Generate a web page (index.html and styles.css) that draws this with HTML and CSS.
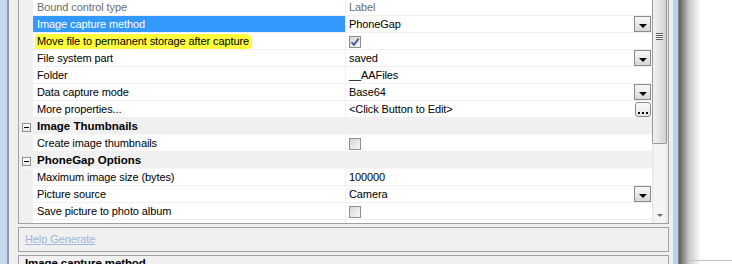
FILE: index.html
```html
<!DOCTYPE html>
<html lang="en">
<head>
    <meta charset="UTF-8">
    <title>Properties</title>
    <link rel="stylesheet" href="styles.css">
</head>
<body>
    <div class="window">
        <div class="frame-left"></div>

        <div class="panel">
            <div class="grid">
                <div class="rows">
                    <div class="row readonly">
                        <div class="gutter"></div>
                        <div class="label">Bound control type</div>
                        <div class="value">Label</div>
                    </div>
                    <div class="row selected">
                        <div class="gutter"></div>
                        <div class="label">Image capture method</div>
                        <div class="value">PhoneGap<span class="drop"></span></div>
                    </div>
                    <div class="row">
                        <div class="gutter"></div>
                        <div class="label"><span class="mark">Move file to permanent storage after capture</span></div>
                        <div class="value">
                            <span class="check checked">
                                <svg width="10" height="10" viewBox="0 0 10 10"><path d="M1.5 5.2 L4 7.8 L8.6 1.6" fill="none" stroke="#3f5d9c" stroke-width="1.8"/></svg>
                            </span>
                        </div>
                    </div>
                    <div class="row">
                        <div class="gutter"></div>
                        <div class="label">File system part</div>
                        <div class="value">saved<span class="drop"></span></div>
                    </div>
                    <div class="row">
                        <div class="gutter"></div>
                        <div class="label">Folder</div>
                        <div class="value">__AAFiles</div>
                    </div>
                    <div class="row">
                        <div class="gutter"></div>
                        <div class="label">Data capture mode</div>
                        <div class="value">Base64<span class="drop"></span></div>
                    </div>
                    <div class="row">
                        <div class="gutter"></div>
                        <div class="label">More properties...</div>
                        <div class="value">&lt;Click Button to Edit&gt;<span class="ellipsis"><i></i><i></i><i></i></span></div>
                    </div>
                    <div class="row category">
                        <div class="gutter"><span class="toggle"></span></div>
                        <div class="label">Image Thumbnails</div>
                    </div>
                    <div class="row">
                        <div class="gutter"></div>
                        <div class="label">Create image thumbnails</div>
                        <div class="value"><span class="check"></span></div>
                    </div>
                    <div class="row category">
                        <div class="gutter"><span class="toggle"></span></div>
                        <div class="label">PhoneGap Options</div>
                    </div>
                    <div class="row">
                        <div class="gutter"></div>
                        <div class="label">Maximum image size (bytes)</div>
                        <div class="value">100000</div>
                    </div>
                    <div class="row">
                        <div class="gutter"></div>
                        <div class="label">Picture source</div>
                        <div class="value">Camera<span class="drop"></span></div>
                    </div>
                    <div class="row">
                        <div class="gutter"></div>
                        <div class="label">Save picture to photo album</div>
                        <div class="value"><span class="check"></span></div>
                    </div>
                    <div class="row">
                        <div class="gutter"></div>
                        <div class="label"></div>
                        <div class="value"></div>
                    </div>
                </div>
                <div class="scrollbar">
                    <div class="thumb"><span class="grip"></span></div>
                    <div class="track"></div>
                    <div class="arrow"><span></span></div>
                </div>
            </div>

            <div class="help"><a href="#">Help Generate</a></div>

            <div class="desc"><b>Image capture method</b></div>
        </div>

        <div class="frame-right"><div class="ledge"></div></div>
    </div>
</body>
</html>
```

FILE: styles.css
```css
/* General Reset */
* {
    margin: 0;
    padding: 0;
    box-sizing: border-box;
}

body {
    width: 732px;
    height: 264px;
    overflow: hidden;
    background-color: white;
    font-family: 'Liberation Sans', Arial, sans-serif;
    font-size: 11px;
    letter-spacing: -0.1px;
    color: black;
}

.window {
    display: flex;
    height: 264px;
}

.frame-left {
    width: 9px;
    background-color: #c7d9ee;
    border-right: 2px solid #8f9aa6;
}

.panel {
    width: 664px;
    display: flex;
    flex-direction: column;
    gap: 3px;
    padding: 0 4px 0 9px;
    background-color: #f0f0f0;
    overflow: hidden;
}

.frame-right {
    flex: 1;
    background: linear-gradient(to right, #b8d2ef 0, #b8d2ef 5px, #8c8c8c 5px, #8c8c8c 6px, #5c5c5c 6px, #c8c8c8 16px, white 28px);
}

.frame-right .ledge {
    margin: 260px 0 0 14px;
    height: 1px;
    background-color: #c4c4c4;
}

/* Property grid */
.grid {
    display: flex;
    flex-shrink: 0;
    height: 226px;
    margin-top: -2px;
    border: 1px solid #a0a0a0;
    background-color: white;
    overflow: hidden;
}

.rows {
    width: 633px;
    display: flex;
    flex-direction: column;
    overflow: hidden;
}

.row {
    display: flex;
    flex-shrink: 0;
    height: 17px;
    border-bottom: 1px solid #f0f0f0;
    line-height: 16px;
    white-space: nowrap;
}

.row .gutter {
    width: 14px;
    background-color: #f0f0f0;
}

.row .label {
    width: 312px;
    padding-left: 4px;
    overflow: hidden;
}

.row .value {
    flex: 1;
    display: flex;
    align-items: center;
    padding-left: 3px;
    border-left: 1px solid #f0f0f0;
}

.row.readonly {
    color: #6d6d6d;
}

.row.selected .label {
    background-color: #3399ff;
    color: white;
}

.row .mark {
    display: inline-block;
    margin-left: -2px;
    padding: 0 3px 0 2px;
    line-height: 15px;
    background-color: #ffff3c;
    border-radius: 3px 6px 4px 2px;
}

.row.category {
    background-color: #f0f0f0;
    border-bottom-color: #f7f7f7;
}

.row.category .label {
    flex: 1;
    font-weight: bold;
    font-size: 11.5px;
    letter-spacing: 0;
}

.row.category .gutter {
    padding: 5px 0 0 3px;
}

.toggle {
    display: flex;
    align-items: center;
    justify-content: center;
    width: 9px;
    height: 9px;
    border: 1px solid #8e8e8e;
    background: linear-gradient(white, #e6e6e6);
}

.toggle::after {
    content: "";
    width: 5px;
    height: 1px;
    background-color: black;
}

/* Editors inside the value column */
.drop {
    display: flex;
    align-items: center;
    justify-content: center;
    margin-left: auto;
    margin-right: 1px;
    width: 17px;
    height: 16px;
    padding-top: 3px;
    border: 1px solid #8a8a8a;
    background: linear-gradient(#f7f7f7, #ececec 45%, #d6d6d6);
}

.drop::after {
    content: "";
    border-top: 4px solid black;
    border-left: 4px solid transparent;
    border-right: 4px solid transparent;
}

.ellipsis {
    display: flex;
    align-items: flex-end;
    justify-content: center;
    gap: 2px;
    margin-left: auto;
    margin-right: 1px;
    width: 16px;
    height: 15px;
    padding-bottom: 2px;
    border: 1px solid #8a8a8a;
    border-radius: 3px;
    background: linear-gradient(#fafafa, #e4e4e4);
}

.ellipsis i {
    width: 2px;
    height: 2px;
    background-color: black;
}

.check {
    display: flex;
    align-items: center;
    justify-content: center;
    width: 12px;
    height: 12px;
    margin-top: 1px;
    border: 1px solid #8f8f8f;
    background: linear-gradient(135deg, #d6d6d6, #f8f8f8);
}

/* Scrollbar */
.scrollbar {
    width: 16px;
    display: flex;
    flex-direction: column;
    background: linear-gradient(to right, #e2e2e2, #f4f4f4 2px, #f4f4f4 13px, #e4e4e4);
}

.scrollbar .thumb {
    display: flex;
    justify-content: center;
    flex-shrink: 0;
    width: 15px;
    height: 145px;
    padding-top: 34px;
    border: 1px solid #989898;
    border-top: none;
    border-radius: 0 0 2px 2px;
    background: linear-gradient(to right, #f2f2f2, #e4e4e4 50%, #d0d0d0);
}

.scrollbar .grip {
    width: 7px;
    height: 7px;
    background: repeating-linear-gradient(#5f5f5f 0, #5f5f5f 1px, #f4f4f4 1px, #f4f4f4 2px);
}

.scrollbar .track {
    flex: 1;
}

.scrollbar .arrow {
    display: flex;
    align-items: center;
    justify-content: center;
    height: 16px;
}

.scrollbar .arrow span {
    border-top: 3px solid #6a6a6a;
    border-left: 3px solid transparent;
    border-right: 3px solid transparent;
}

/* Help and description panels */
.help {
    flex-shrink: 0;
    height: 25px;
    padding-left: 6px;
    line-height: 23px;
    border: 1px solid #a0a0a0;
    background-color: #f0f0f0;
}

.help a {
    color: #9fb6d6;
}

.desc {
    flex: 1;
    min-height: 0;
    padding-left: 6px;
    line-height: 14px;
    border: 1px solid #a0a0a0;
    border-bottom: none;
    background-color: #f0f0f0;
}

.desc b {
    font-size: 11.5px;
}
```
